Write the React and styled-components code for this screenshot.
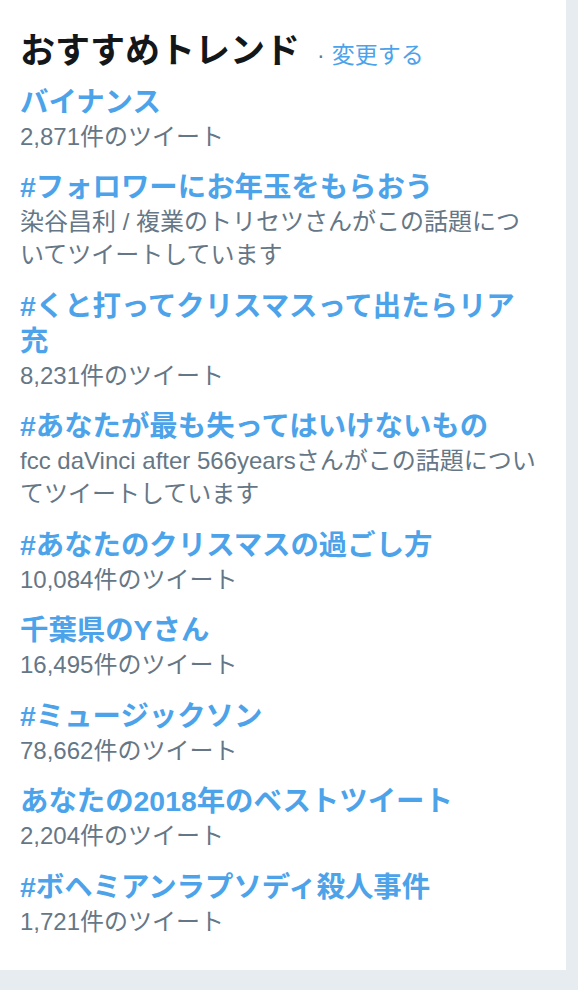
import styled, { createGlobalStyle } from 'styled-components';

const GlobalStyle = createGlobalStyle`
  html, body {
    margin: 0;
    padding: 0;
    background-color: #e6ecf0;
  }
  body {
    font-family: 'Liberation Sans', 'Noto Sans CJK JP', sans-serif;
  }
`;

const Page = styled.div`
  width: 578px;
  height: 990px;
  background-color: #e6ecf0;
`;

const Panel = styled.section`
  box-sizing: border-box;
  width: 566px;
  background-color: #ffffff;
  padding: 29px 28px 15px 20px;
`;

const Header = styled.div`
  display: flex;
  align-items: baseline;
  height: 44px;
  margin-bottom: 11.5px;
`;

const Title = styled.h3`
  margin: 0;
  font-size: 35px;
  font-weight: 700;
  line-height: 44px;
  color: #14171a;
`;

const Dot = styled.span`
  margin-left: 17px;
  font-size: 23px;
  color: #657786;
`;

const ChangeLink = styled.a`
  margin-left: 7px;
  font-size: 23px;
  color: #4ca3ea;
  text-decoration: none;
  cursor: pointer;
`;

const TrendList = styled.ul`
  list-style: none;
  margin: 0;
  padding: 0;
`;

const TrendItem = styled.li`
  padding-bottom: 17.5px;
`;

const TrendName = styled.a`
  display: block;
  font-size: 28.4px;
  font-weight: 700;
  line-height: 35px;
  color: #4ca3ea;
  text-decoration: none;
  cursor: pointer;
`;

const TrendMeta = styled.div`
  font-size: 24px;
  line-height: 33px;
  color: #657786;
`;

const trends = [
  { name: 'バイナンス', meta: '2,871件のツイート' },
  { name: '#フォロワーにお年玉をもらおう', meta: '染谷昌利 / 複業のトリセツさんがこの話題についてツイートしています' },
  { name: '#くと打ってクリスマスって出たらリア充', meta: '8,231件のツイート' },
  { name: '#あなたが最も失ってはいけないもの', meta: 'fcc daVinci after 566yearsさんがこの話題についてツイートしています' },
  { name: '#あなたのクリスマスの過ごし方', meta: '10,084件のツイート' },
  { name: '千葉県のYさん', meta: '16,495件のツイート' },
  { name: '#ミュージックソン', meta: '78,662件のツイート' },
  { name: 'あなたの2018年のベストツイート', meta: '2,204件のツイート' },
  { name: '#ボヘミアンラプソディ殺人事件', meta: '1,721件のツイート' },
];

export default function App() {
  return (
    <Page>
      <GlobalStyle />
      <Panel>
        <Header>
          <Title>おすすめトレンド</Title>
          <Dot>·</Dot>
          <ChangeLink>変更する</ChangeLink>
        </Header>
        <TrendList>
          {trends.map((t) => (
            <TrendItem key={t.name}>
              <TrendName>{t.name}</TrendName>
              <TrendMeta>{t.meta}</TrendMeta>
            </TrendItem>
          ))}
        </TrendList>
      </Panel>
    </Page>
  );
}
